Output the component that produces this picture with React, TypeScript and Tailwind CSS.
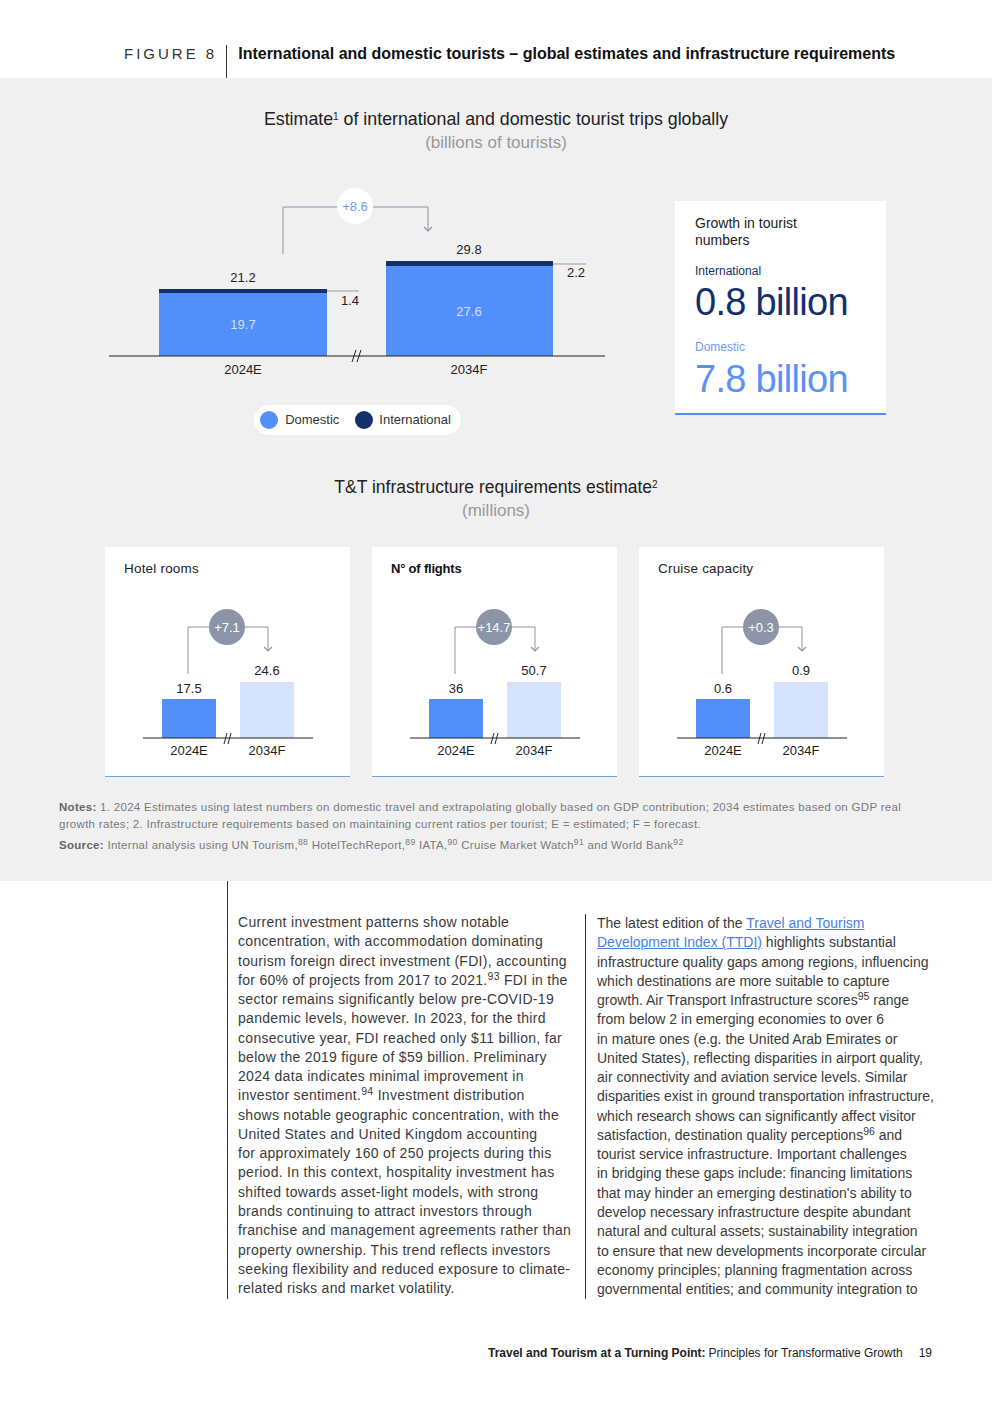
import React from "react";

// Colours
const BLUE = "#528ffa";
const NAVY = "#14306b";
const PALE = "#d4e3fb";
const LINK = "#8d93a0";

const leftLines: React.ReactNode[] = [
  "Current investment patterns show notable",
  "concentration, with accommodation dominating",
  "tourism foreign direct investment (FDI), accounting",
  <>for 60% of projects from 2017 to 2021.<sup>93</sup> FDI in the</>,
  "sector remains significantly below pre-COVID-19",
  "pandemic levels, however. In 2023, for the third",
  "consecutive year, FDI reached only $11 billion, far",
  "below the 2019 figure of $59 billion. Preliminary",
  "2024 data indicates minimal improvement in",
  <>investor sentiment.<sup>94</sup> Investment distribution</>,
  "shows notable geographic concentration, with the",
  "United States and United Kingdom accounting",
  "for approximately 160 of 250 projects during this",
  "period. In this context, hospitality investment has",
  "shifted towards asset-light models, with strong",
  "brands continuing to attract investors through",
  "franchise and management agreements rather than",
  "property ownership. This trend reflects investors",
  "seeking flexibility and reduced exposure to climate-",
  "related risks and market volatility.",
];

const rightLines: React.ReactNode[] = [
  <>
    The latest edition of the{" "}
    <a href="#" className="text-[#4a7fe0] underline">Travel and Tourism </a>
  </>,
  <>
    <a href="#" className="text-[#4a7fe0] underline">Development Index (TTDI)</a> highlights substantial
  </>,
  "infrastructure quality gaps among regions, influencing",
  "which destinations are more suitable to capture",
  <>growth. Air Transport Infrastructure scores<sup>95</sup> range</>,
  "from below 2 in emerging economies to over 6",
  "in mature ones (e.g. the United Arab Emirates or",
  "United States), reflecting disparities in airport quality,",
  "air connectivity and aviation service levels. Similar",
  "disparities exist in ground transportation infrastructure,",
  "which research shows can significantly affect visitor",
  <>satisfaction, destination quality perceptions<sup>96</sup> and</>,
  "tourist service infrastructure. Important challenges",
  "in bridging these gaps include: financing limitations",
  "that may hinder an emerging destination's ability to",
  "develop necessary infrastructure despite abundant",
  "natural and cultural assets; sustainability integration",
  "to ensure that new developments incorporate circular",
  "economy principles; planning fragmentation across",
  "governmental entities; and community integration to",
];

const MainChart = () => (
  <svg width={505} height={220} className="block">
    {/* bracket */}
    <path d="M178 74 V27 H323 V51" fill="none" stroke={LINK} strokeWidth={1} />
    <path d="M319 47 L323 51 L327 47" fill="none" stroke={LINK} strokeWidth={1.2} />
    <circle cx={250} cy={26} r={18} fill="#ffffff" />
    <text x={250} y={30.5} textAnchor="middle" fontSize={13} fill="#6a9af0">+8.6</text>

    {/* bars */}
    <rect x={54} y={109} width={168} height={4} fill={NAVY} />
    <rect x={54} y={113} width={168} height={63} fill={BLUE} />
    <rect x={281} y={81} width={167} height={5} fill={NAVY} />
    <rect x={281} y={86} width={167} height={90} fill={BLUE} />

    {/* connectors */}
    <line x1={222} y1={111} x2={254} y2={111} stroke="#9a9a9a" strokeWidth={1} />
    <line x1={448} y1={84} x2={481} y2={84} stroke="#9a9a9a" strokeWidth={1} />

    <text x={138} y={101.5} textAnchor="middle" fontSize={13} fill="#222">21.2</text>
    <text x={364} y={73.5} textAnchor="middle" fontSize={13} fill="#222">29.8</text>
    <text x={245} y={124.5} textAnchor="middle" fontSize={13} fill="#222">1.4</text>
    <text x={471} y={96.5} textAnchor="middle" fontSize={13} fill="#222">2.2</text>
    <text x={138} y={148.5} textAnchor="middle" fontSize={13} fill="#cfe0ff">19.7</text>
    <text x={364} y={135.5} textAnchor="middle" fontSize={13} fill="#cfe0ff">27.6</text>

    {/* axis */}
    <line x1={4} y1={176} x2={500} y2={176} stroke="#222" strokeWidth={1} />
    <line x1={247} y1={182} x2={251} y2={170} stroke="#222" strokeWidth={1} />
    <line x1={252} y1={182} x2={256} y2={170} stroke="#222" strokeWidth={1} />
    <text x={138} y={193.5} textAnchor="middle" fontSize={13} fill="#222">2024E</text>
    <text x={364} y={193.5} textAnchor="middle" fontSize={13} fill="#222">2034F</text>
  </svg>
);

interface MiniProps {
  title: string;
  a: string;
  b: string;
  delta: string;
  boldTitle?: boolean;
}

const MiniChart = ({ title, a, b, delta, boldTitle }: MiniProps) => (
  <div className="h-[230px] w-[245px] border-b border-[#74a2d9] bg-white">
    <div
      className={
        boldTitle
          ? "h-[30px] pl-[19px] pt-[13px] text-[13px] font-bold leading-[17px] tracking-[-0.2px] text-[#111]"
          : "h-[30px] pl-[19px] pt-[13px] text-[13.5px] leading-[17px] tracking-[0.2px] text-[#222]"
      }
    >
      {title}
    </div>
    <svg width={245} height={199} className="block">
      <path d="M83 97 V50 H163 V74" fill="none" stroke={LINK} strokeWidth={1} />
      <path d="M159 70 L163 74 L167 70" fill="none" stroke={LINK} strokeWidth={1.2} />
      <circle cx={122} cy={50} r={18} fill="#8c95a8" />
      <text x={122} y={54.5} textAnchor="middle" fontSize={13} fill="#ffffff">{delta}</text>

      <rect x={57} y={122} width={54} height={39} fill={BLUE} />
      <rect x={135} y={105} width={54} height={56} fill={PALE} />

      <text x={84} y={115.5} textAnchor="middle" fontSize={13} fill="#222">{a}</text>
      <text x={162} y={97.5} textAnchor="middle" fontSize={13} fill="#222">{b}</text>

      <line x1={38} y1={161} x2={208} y2={161} stroke="#222" strokeWidth={1} />
      <line x1={119} y1={167} x2={122} y2={156} stroke="#222" strokeWidth={1} />
      <line x1={123} y1={167} x2={126} y2={156} stroke="#222" strokeWidth={1} />
      <text x={84} y={178} textAnchor="middle" fontSize={13} fill="#222">2024E</text>
      <text x={162} y={178} textAnchor="middle" fontSize={13} fill="#222">2034F</text>
    </svg>
  </div>
);

export default function App() {
  return (
    <div className="min-h-[1403px] w-[992px] bg-white font-['Liberation_Sans',Arial,sans-serif] text-[#222]">
      {/* Figure header */}
      <div className="flex h-[78px] items-end pl-[124px]">
        <div className="mb-[15px] text-[15px] leading-[18px] tracking-[3px] text-[#333]">FIGURE 8</div>
        <div className="ml-[9px] h-[33px] border-l border-[#333]" />
        <div className="mb-[15px] ml-[11px] text-[16px] font-bold leading-[18px] text-[#111]">
          International and domestic tourists – global estimates and infrastructure requirements
        </div>
      </div>

      {/* Grey figure area */}
      <div className="bg-[#f0f0f0] pt-[29px] pb-[27px]">
        <div className="text-center text-[17.8px] leading-[24px] text-[#222]">
          Estimate<sup className="text-[10px]">1</sup> of international and domestic tourist trips globally
        </div>
        <div className="text-center text-[17px] leading-[24px] text-[#999]">(billions of tourists)</div>

        <div className="mt-[25px] flex pl-[105px]">
          <div className="flex w-[505px] flex-col items-center">
            <MainChart />
            <div className="mt-[5px] flex h-[30px] items-center rounded-full bg-white pr-[10px] pl-[6px] text-[13px] text-[#333]">
              <span className="h-[18px] w-[18px] rounded-full bg-[#528ffa]" />
              <span className="ml-[7px]">Domestic</span>
              <span className="ml-[16px] h-[18px] w-[18px] rounded-full bg-[#14306b]" />
              <span className="ml-[6px]">International</span>
            </div>
          </div>

          <div className="mt-[21px] ml-[65px] h-[214px] w-[211px] border-b-2 border-[#4f8ef7] bg-white pt-[14px] pl-[20px]">
            <div className="text-[14px] leading-[17px] text-[#222]">
              Growth in tourist
              <br />
              numbers
            </div>
            <div className="mt-[15px] text-[12px] leading-[15px] text-[#14306b]">International</div>
            <div className="mt-[3px] text-[38px] leading-[40px] tracking-[-0.7px] text-[#14306b]">0.8 billion</div>
            <div className="mt-[18px] text-[12px] leading-[15px] text-[#6b9cf0]">Domestic</div>
            <div className="mt-[4px] text-[38px] leading-[40px] tracking-[-0.7px] text-[#5b92f2]">7.8 billion</div>
          </div>
        </div>

        <div className="mt-[40px] text-center text-[17.5px] leading-[24px] text-[#222]">
          T&amp;T infrastructure requirements estimate<sup className="text-[10px]">2</sup>
        </div>
        <div className="text-center text-[17px] leading-[24px] text-[#999]">(millions)</div>

        <div className="mt-[24px] flex gap-[22px] pl-[105px]">
          <MiniChart title="Hotel rooms" a="17.5" b="24.6" delta="+7.1" />
          <MiniChart title="N° of flights" a="36" b="50.7" delta="+14.7" boldTitle />
          <MiniChart title="Cruise capacity" a="0.6" b="0.9" delta="+0.3" />
        </div>

        <div className="mt-[22px] pl-[59px] text-[11.5px] leading-[17px] tracking-[0.3px] whitespace-nowrap text-[#7a7a7a]">
          <div>
            <span className="font-bold text-[#666]">Notes:</span> 1. 2024 Estimates using latest numbers on domestic
            travel and extrapolating globally based on GDP contribution; 2034 estimates based on GDP real
            <br />
            growth rates; 2. Infrastructure requirements based on maintaining current ratios per tourist; E = estimated;
            F = forecast.
          </div>
          <div className="mt-[4px]">
            <span className="font-bold text-[#666]">Source:</span> Internal analysis using UN Tourism,<sup>88</sup>{" "}
            HotelTechReport,<sup>89</sup> IATA,<sup>90</sup> Cruise Market Watch<sup>91</sup> and World Bank
            <sup>92</sup>
          </div>
        </div>
      </div>

      {/* Body text */}
      <div className="flex pl-[227px] text-[14px] leading-[19.26px] whitespace-nowrap text-[#3a3a3a]">
        <div className="w-[358px] border-l border-[#333] pt-[32px] pl-[10px] tracking-[0.3px]">
          {leftLines.map((line, i) => (
            <div key={i}>{line}</div>
          ))}
        </div>
        <div className="mt-[33px] border-l border-[#333] pl-[11px]">
          {rightLines.map((line, i) => (
            <div key={i}>{line}</div>
          ))}
        </div>
      </div>

      {/* Footer */}
      <div className="mt-[46px] flex justify-end pr-[60px] text-[12px] leading-[16px] text-[#222]">
        <span className="font-bold">Travel and Tourism at a Turning Point:</span>
        <span className="ml-[3px]">Principles for Transformative Growth</span>
        <span className="ml-[16px]">19</span>
      </div>
    </div>
  );
}
